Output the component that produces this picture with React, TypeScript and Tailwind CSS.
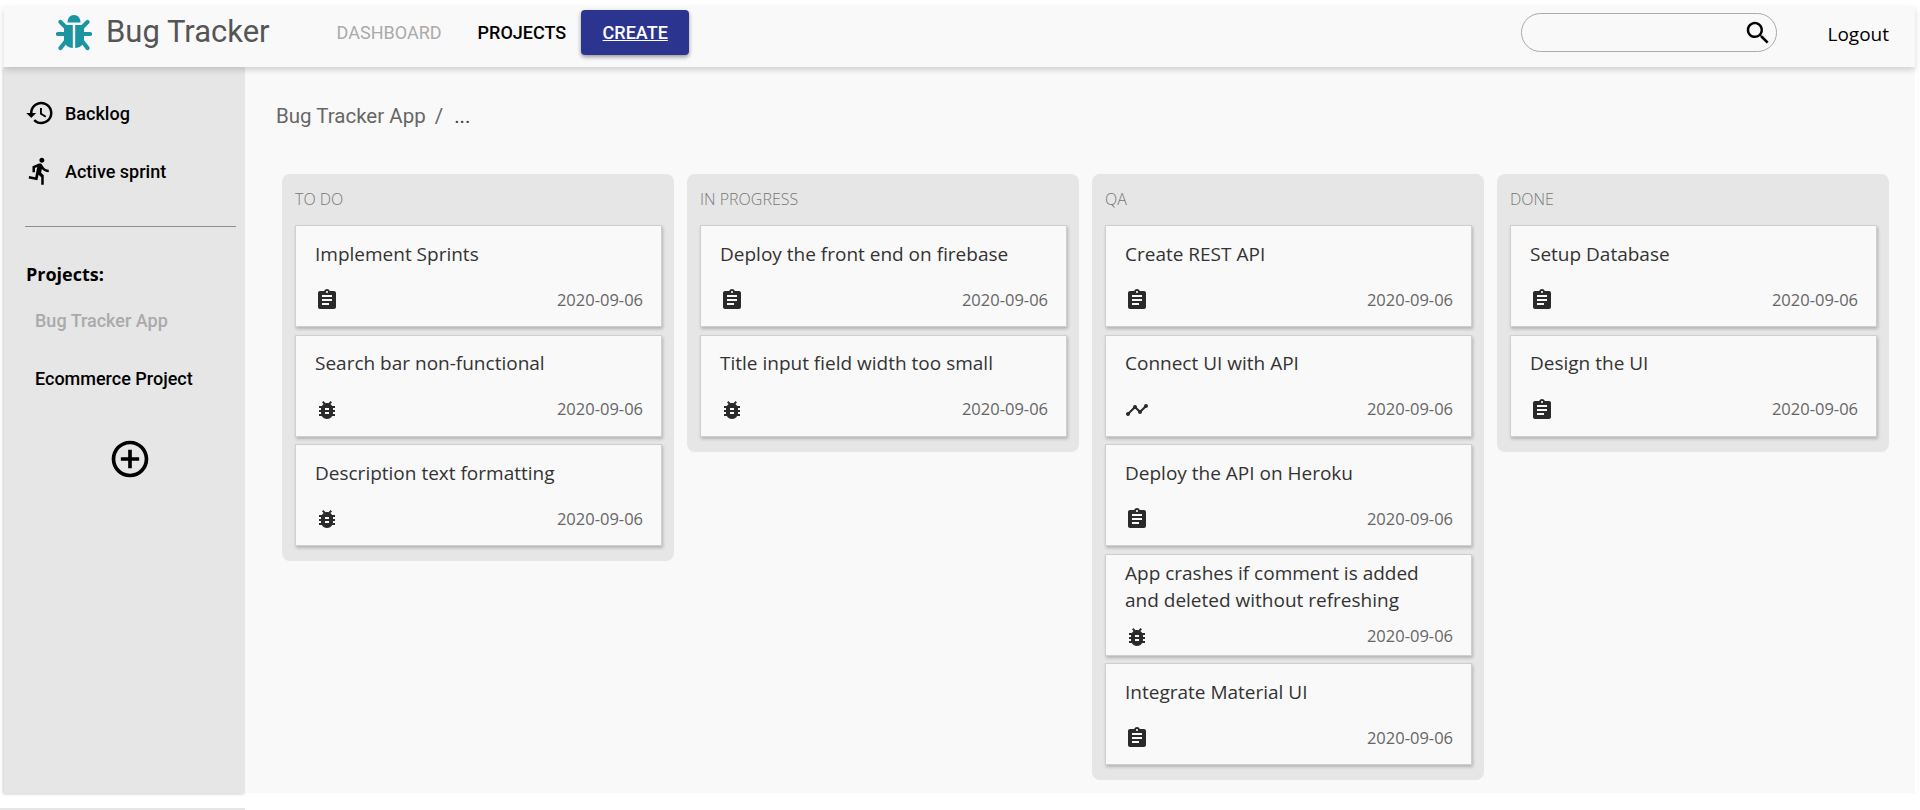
import type { ReactNode } from "react";

const paths = {
  assignment:
    "M19 3h-4.18C14.4 1.84 13.3 1 12 1c-1.3 0-2.4.84-2.82 2H5c-1.1 0-2 .9-2 2v14c0 1.1.9 2 2 2h14c1.1 0 2-.9 2-2V5c0-1.1-.9-2-2-2zm-7 0c.55 0 1 .45 1 1s-.45 1-1 1-1-.45-1-1 .45-1 1-1zm2 14H7v-2h7v2zm3-4H7v-2h10v2zm0-4H7V7h10v2z",
  bug: "M20 8h-2.81c-.45-.78-1.07-1.45-1.82-1.96L17 4.41 15.59 3l-2.17 2.17C12.96 5.06 12.49 5 12 5c-.49 0-.96.06-1.41.17L8.41 3 7 4.41l1.62 1.63C7.88 6.55 7.26 7.22 6.81 8H4v2h2.09c-.05.33-.09.66-.09 1v1H4v2h2v1c0 .34.04.67.09 1H4v2h2.81c1.04 1.79 2.97 3 5.19 3s4.15-1.21 5.19-3H20v-2h-2.09c.05-.33.09-.66.09-1v-1h2v-2h-2v-1c0-.34-.04-.67-.09-1H20V8zm-6 8h-4v-2h4v2zm0-4h-4v-2h4v2z",
  timeline:
    "M23 8c0 1.1-.9 2-2 2-.18 0-.35-.02-.51-.07l-3.56 3.55c.05.16.07.34.07.52 0 1.1-.9 2-2 2s-2-.9-2-2c0-.18.02-.36.07-.52l-2.55-2.55c-.16.05-.34.07-.52.07s-.36-.02-.52-.07l-4.55 4.56c.05.16.07.33.07.51 0 1.1-.9 2-2 2s-2-.9-2-2 .9-2 2-2c.18 0 .35.02.51.07l4.56-4.55C8.02 9.36 8 9.18 8 9c0-1.1.9-2 2-2s2 .9 2 2c0 .18-.02.36-.07.52l2.55 2.55c.16-.05.34-.07.52-.07s.36.02.52.07l3.55-3.56C19.02 8.35 19 8.18 19 8c0-1.1.9-2 2-2s2 .9 2 2z",
  history:
    "M13 3c-4.97 0-9 4.03-9 9H1l3.89 3.89.07.14L9 12H6c0-3.87 3.13-7 7-7s7 3.13 7 7-3.13 7-7 7c-1.93 0-3.68-.79-4.94-2.06l-1.42 1.42C8.27 19.99 10.51 21 13 21c4.97 0 9-4.03 9-9s-4.03-9-9-9zm-1 5v5l4.28 2.54.72-1.21-3.5-2.08V8H12z",
  run: "M13.49 5.48c1.1 0 2-.9 2-2s-.9-2-2-2-2 .9-2 2 .9 2 2 2zm-3.6 13.9l1-4.4 2.1 2v6h2v-7.5l-2.1-2 .6-3c1.3 1.5 3.3 2.5 5.5 2.5v-2c-1.9 0-3.5-1-4.3-2.4l-1-1.6c-.4-.6-1-1-1.7-1-.3 0-.5.1-.8.1l-5.2 2.2v4.7h2v-3.4l1.8-.7-1.6 8.1-4.9-1-.4 2 7 1.4z",
  add: "M13 7h-2v4H7v2h4v4h2v-4h4v-2h-4V7zm-1-5C6.48 2 2 6.48 2 12s4.48 10 10 10 10-4.48 10-10S17.52 2 12 2zm0 18c-4.41 0-8-3.59-8-8s3.59-8 8-8 8 3.59 8 8-3.59 8-8 8z",
  search:
    "M15.5 14h-.79l-.28-.27C15.41 12.59 16 11.11 16 9.5 16 5.91 13.09 3 9.5 3S3 5.91 3 9.5 5.91 16 9.5 16c1.61 0 3.09-.59 4.23-1.57l.27.28v.79l5 4.99L20.49 19l-4.99-5zm-6 0C7.01 14 5 11.99 5 9.5S7.01 5 9.5 5 14 7.01 14 9.5 11.99 14 9.5 14z",
};

type IconName = keyof typeof paths;

function Icon({ name, className }: { name: IconName; className?: string }) {
  return (
    <svg viewBox="0 0 24 24" fill="currentColor" className={className}>
      <path d={paths[name]} />
    </svg>
  );
}

function Logo() {
  return (
    <svg viewBox="0 0 36 36" fill="#1b96a0" className="ml-[52px] h-[36px] w-[36px] shrink-0">
      <path d="M11.5 7.5C11.5 3 14 0 18 0s6.5 3 6.5 7.5z" />
      <path d="M8 10h8.8v23C11.5 33 8 29 8 24z" />
      <path d="M19.2 10H28v14c0 5-3.5 9-8.8 9z" />
      <g stroke="#1b96a0" strokeWidth="4.2" strokeLinecap="round">
        <path d="M4.5 7l6 6M31.5 7l-6 6M2 19h8M34 19h-8M10 26l-5.5 7M26 26l5.5 7" />
      </g>
    </svg>
  );
}

const columns: { title: string; cards: { title: string; icon: IconName }[] }[] = [
  {
    title: "TO DO",
    cards: [
      { title: "Implement Sprints", icon: "assignment" },
      { title: "Search bar non-functional", icon: "bug" },
      { title: "Description text formatting", icon: "bug" },
    ],
  },
  {
    title: "IN PROGRESS",
    cards: [
      { title: "Deploy the front end on firebase", icon: "assignment" },
      { title: "Title input field width too small", icon: "bug" },
    ],
  },
  {
    title: "QA",
    cards: [
      { title: "Create REST API", icon: "assignment" },
      { title: "Connect UI with API", icon: "timeline" },
      { title: "Deploy the API on Heroku", icon: "assignment" },
      { title: "App crashes if comment is added and deleted without refreshing", icon: "bug" },
      { title: "Integrate Material UI", icon: "assignment" },
    ],
  },
  {
    title: "DONE",
    cards: [
      { title: "Setup Database", icon: "assignment" },
      { title: "Design the UI", icon: "assignment" },
    ],
  },
];

function Card({ title, icon }: { title: string; icon: IconName }) {
  return (
    <div className="h-[102px] overflow-hidden border border-[#cfcfcf] bg-[#f9f9f9] shadow-[1px_2px_3px_rgba(0,0,0,0.22)] pl-[19px] pr-[18px]">
      <div className="flex min-h-[62px] items-center pt-[5px] pb-[11px] text-[19px] leading-[27px] text-[#333]">
        {title}
      </div>
      <div className="flex h-6 items-center justify-between">
        <Icon name={icon} className="h-6 w-6 text-[#2a2a2a]" />
        <span className="text-[16.5px] text-[#666]">2020-09-06</span>
      </div>
    </div>
  );
}

function Column({ title, cards }: (typeof columns)[number]) {
  return (
    <div className="w-[392px] self-start rounded-lg bg-[#e6e6e6] pr-[12px] pl-[13px] pb-[15px]">
      <div className="mb-[1px] flex h-[50px] items-center text-[16px] font-light text-[#777]">{title}</div>
      <div className="flex flex-col gap-[7.5px]">
        {cards.map((card) => (
          <Card key={card.title} {...card} />
        ))}
      </div>
    </div>
  );
}

function SideLink({ icon, children }: { icon: IconName; children: ReactNode }) {
  return (
    <div className="flex h-[58px] items-center gap-[10px] pl-[21px] text-[18px] font-medium text-black">
      <Icon name={icon} className="h-[30px] w-[30px]" />
      <span>{children}</span>
    </div>
  );
}

export default function App() {
  return (
    <div className="flex h-[810px] flex-col overflow-hidden bg-white font-['Open_Sans',sans-serif]">
      <div className="flex min-h-0 flex-1 flex-col pt-[6px] pr-[5px] pl-[4px]">
        {/* Top bar */}
        <header className="relative z-10 flex h-[61px] shrink-0 items-center bg-[#f9f9f9] pb-[8px] shadow-[0_3px_6px_rgba(0,0,0,0.16)] font-['Roboto',sans-serif]">
          <Logo />
          <span className="ml-[14px] text-[31px] text-[#555]">Bug Tracker</span>
          <span className="ml-[67px] text-[18px] text-[#aaa]">DASHBOARD</span>
          <span className="ml-[36px] text-[18px] font-medium text-black">PROJECTS</span>
          <span className="ml-[15px] flex h-[45px] w-[108px] items-center justify-center rounded bg-[#2b3590] text-[18px] font-medium text-white underline shadow-[0_2px_4px_rgba(0,0,0,0.4)]">
            CREATE
          </span>
          <div className="ml-auto flex h-[39px] w-[256px] items-center justify-end rounded-full border border-[#aaa] pr-[3px]">
            <Icon name="search" className="h-[30px] w-[30px] text-black" />
          </div>
          <span className="mr-[26px] ml-[50px] pt-[3px] font-['Open_Sans',sans-serif] text-[19px] text-black">Logout</span>
        </header>

        <div className="flex min-h-0 flex-1">
          {/* Sidebar */}
          <aside className="w-[241px] shrink-0 bg-[#e6e6e6] pt-[17px] shadow-[-1px_1px_3px_rgba(0,0,0,0.2)] font-['Roboto',sans-serif]">
            <SideLink icon="history">Backlog</SideLink>
            <SideLink icon="run">Active sprint</SideLink>
            <div className="mt-[26px] mr-[9px] ml-[21px] border-t border-[#8f8f8f]" />
            <div className="mt-[34px] pl-[22px] font-['Open_Sans',sans-serif] text-[18px] font-bold text-black">Projects:</div>
            <div className="mt-[19px] pl-[31px] text-[18px] font-medium text-[#aaa]">Bug Tracker App</div>
            <div className="mt-[31px] pl-[31px] text-[18px] font-medium text-black">Ecommerce Project</div>
            <div className="mt-[45px] flex justify-center pl-[11px]">
              <Icon name="add" className="h-[44px] w-[44px] text-black" />
            </div>
          </aside>

          {/* Board */}
          <main className="min-w-0 flex-1 bg-[#f9f9f9] pt-[37px] pl-[31px]">
            <div className="flex h-[25px] items-center gap-[9px] font-['Roboto',sans-serif] text-[20.5px] text-[#666]">
              <span>Bug Tracker App</span>
              <span>/</span>
              <span className="ml-[2px] text-[#444]">...</span>
            </div>
            <div className="mt-[45px] ml-[6px] flex gap-[13px]">
              {columns.map((column) => (
                <Column key={column.title} {...column} />
              ))}
            </div>
          </main>
        </div>
      </div>
      <div className="mt-[15px] h-[2px] w-[245px] shrink-0 bg-[#e6e6e6]" />
    </div>
  );
}
